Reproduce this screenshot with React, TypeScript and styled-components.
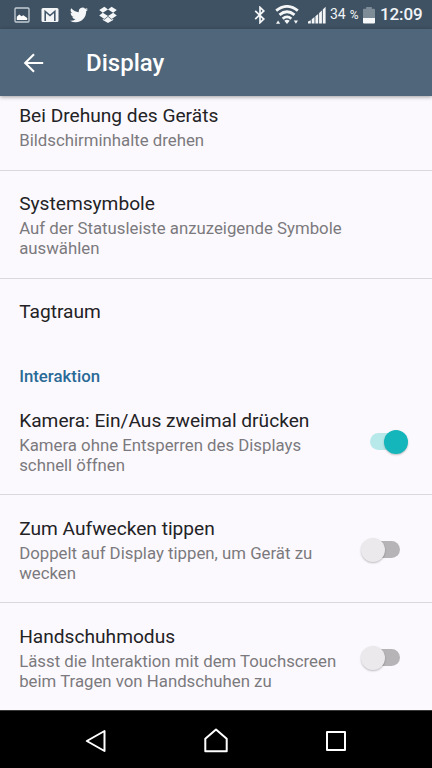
import React from "react";
import styled, { createGlobalStyle } from "styled-components";

const GlobalStyle = createGlobalStyle`
  *, *::before, *::after { box-sizing: border-box; }
  body { margin: 0; background: #fbf9fd; font-family: Roboto, "Noto Sans", sans-serif; }
`;

const Screen = styled.div`
  width: 432px;
  height: 768px;
  display: flex;
  flex-direction: column;
  overflow: hidden;
  background: #fbf9fd;
`;

const StatusBar = styled.div`
  flex: none;
  height: 29px;
  display: flex;
  align-items: center;
  justify-content: space-between;
  padding: 0 10px 0 14px;
  background: #3f5263;
  color: #f2f5f7;
`;

const Notifications = styled.div`
  display: flex;
  align-items: center;
  gap: 11px;
`;

const System = styled.div`
  display: flex;
  align-items: center;
`;

const Indicators = styled.div`
  display: flex;
  align-items: center;
  gap: 9px;
`;

const Percent = styled.span`
  width: 33px;
  margin-left: 4px;
  font-size: 14px;
  line-height: 29px;
  white-space: nowrap;
  padding-top: 1px;
  small { font-size: 12px; margin-left: 4px; }
`;

const Clock = styled.span`
  width: 42px;
  margin-left: 5px;
  font-size: 17px;
  font-weight: 500;
  line-height: 31px;
  letter-spacing: -0.1px;
  white-space: nowrap;
`;

const AppBar = styled.header`
  flex: none;
  position: relative;
  height: 67px;
  display: flex;
  align-items: center;
  padding-left: 23px;
  gap: 42px;
  background: #50667a;
  color: #fff;
  box-shadow: 0 1px 4px rgba(0, 0, 0, 0.38);
`;

const PageTitle = styled.h1`
  margin: 0;
  padding-top: 1px;
  font-size: 24px;
  font-weight: 500;
  line-height: 30px;
`;

const List = styled.main`
  flex: 1;
  min-height: 0;
  overflow: hidden;
`;

const Row = styled.section<{ $height: number; $top: number; $divided?: boolean }>`
  height: ${(p) => p.$height}px;
  padding: ${(p) => p.$top}px 24px 0 19.2px;
  display: flex;
  align-items: flex-start;
  justify-content: space-between;
  border-bottom: ${(p) => (p.$divided ? "1px solid #dbd9dc" : "none")};
`;

const Title = styled.h2`
  margin: 0;
  font-size: 19.15px;
  font-weight: 400;
  line-height: 23px;
  color: #232225;
  white-space: nowrap;
`;

const Summary = styled.p`
  margin: 4px 0 0;
  font-size: 16.8px;
  line-height: 19.5px;
  color: #7b797d;
  white-space: pre;
`;

const SectionTitle = styled.h3`
  height: 42px;
  margin: 0;
  padding: 21px 0 0 19.2px;
  font-size: 16.8px;
  font-weight: 500;
  line-height: 20px;
  color: #2a6a97;
`;

const Track = styled.span<{ $on: boolean }>`
  flex: none;
  width: 29px;
  height: 17px;
  margin: 24px ${(p) => (p.$on ? 9 : 8)}px 0 0;
  display: flex;
  align-items: center;
  justify-content: ${(p) => (p.$on ? "flex-end" : "flex-start")};
  border-radius: 9px;
  background: ${(p) => (p.$on ? "#b8e9ea" : "#b6b4b7")};
`;

const Thumb = styled.span<{ $on: boolean }>`
  flex: none;
  width: 24px;
  height: 24px;
  margin: ${(p) => (p.$on ? "0 -9px 0 0" : "0 0 0 -10px")};
  border-radius: 50%;
  background: ${(p) => (p.$on ? "#14b6bb" : "#ebe9ec")};
  box-shadow: 0 1px 2px rgba(0, 0, 0, 0.25);
`;

const NavBar = styled.nav`
  flex: none;
  height: 58px;
  display: grid;
  grid-template-columns: repeat(3, 120px);
  justify-content: center;
  align-items: center;
  justify-items: center;
  background: #000;
  border-top: 1px solid #39393a;
  padding-top: 3px;
`;

function Switch({ on }: { on: boolean }) {
  return (
    <Track $on={on} role="switch" aria-checked={on}>
      <Thumb $on={on} />
    </Track>
  );
}

interface SettingProps {
  title: string;
  summary?: string;
  height?: number;
  top?: number;
  divided?: boolean;
  on?: boolean;
}

function Setting({ title, summary, height = 108, top = 21, divided = true, on }: SettingProps) {
  return (
    <Row $height={height} $top={top} $divided={divided}>
      <div>
        <Title>{title}</Title>
        {summary && <Summary>{summary}</Summary>}
      </div>
      {on !== undefined && <Switch on={on} />}
    </Row>
  );
}

const PictureIcon = () => (
  <svg width="16" height="16" viewBox="0 0 16 16">
    <rect x="1" y="1" width="14" height="14" rx="1" fill="none" stroke="#c5ced5" strokeWidth="1.3" />
    <path d="M2.8 13V9.7l2.5-2.2 2.2 1.8 1.8-1 3.9 2.8V13z" fill="#fff" />
  </svg>
);

const MailIcon = () => (
  <svg width="18" height="16" viewBox="0 0 18 16">
    <rect x=".5" y="1" width="17" height="14" rx="1.5" fill="#f2f4f6" />
    <path d="M4.2 14V4.4L9 8.5l4.8-4.1V14" fill="none" stroke="#43576a" strokeWidth="1.6" />
  </svg>
);

const BirdIcon = () => (
  <svg width="18" height="18" viewBox="0 0 24 24" fill="#f4f6f8">
    <path d="M23.95 4.57a10 10 0 0 1-2.82.77 4.96 4.96 0 0 0 2.16-2.72c-.95.55-2 .96-3.13 1.18a4.92 4.92 0 0 0-8.38 4.48A13.93 13.93 0 0 1 1.64 3.16a4.92 4.92 0 0 0 1.52 6.57 4.9 4.9 0 0 1-2.23-.61v.06a4.92 4.92 0 0 0 3.95 4.83 5 5 0 0 1-2.21.08 4.94 4.94 0 0 0 4.6 3.42A9.87 9.87 0 0 1 0 19.54a13.99 13.99 0 0 0 7.55 2.21c9.05 0 14-7.5 14-13.98 0-.21 0-.42-.02-.63a9.94 9.94 0 0 0 2.42-2.57z" />
  </svg>
);

const BoxIcon = () => (
  <svg width="18" height="17" viewBox="0 0 18 17" fill="#f4f6f8">
    <path d="M5.4.7 9 3.6 3.8 6.8.2 4zM12.6.7 9 3.6l5.2 3.2L17.8 4zM.2 9.6l3.6-2.8L9 10l-3.6 3zM17.8 9.6l-3.6-2.8L9 10l3.6 3zM9 10.8l3.6 3 1.6-1v1.1L9 17l-5.2-3.1v-1.1l1.6 1z" />
  </svg>
);

const BluetoothIcon = () => (
  <svg width="12" height="18" viewBox="0 0 12 18" fill="none" stroke="#f4f6f8" strokeWidth="1.7">
    <path d="m1.2 4.9 8.6 8.2L6 16.7V1.3l3.8 3.6-8.6 8.2" />
  </svg>
);

const WifiIcon = () => (
  <svg width="24" height="20" viewBox="0 0 24 20">
    <g fill="none" stroke="#f4f6f8" strokeWidth="2.8">
      <path d="M1.2 5.7q10.8-8.6 21.6 0" />
      <path d="M4.5 9.8q7.5-6.2 15 0" />
      <path d="M7.7 13.7q4.3-3.7 8.6 0" />
    </g>
    <path d="m9.3 15.8q2.7-2.2 5.4 0L12 19zM1 18.7l2.1-3.3 2.1 3.3zM18.8 15.4h4.2l-2.1 3.3z" fill="#f4f6f8" />
  </svg>
);

const SignalIcon = () => (
  <svg width="18" height="18" viewBox="0 0 18 18" fill="#f4f6f8">
    <path d="M0 17.5v-2l2.8-1.3v3.3zM3.7 13.3l2.8-2.2v6.4H3.7zM7.4 10.2l2.8-2.3v9.6H7.4zM11.1 7l2.8-2.5v13h-2.8zM14.8 3.6l2.8-2.8v16.7h-2.8z" />
  </svg>
);

const BatteryIcon = () => (
  <svg width="12" height="18" viewBox="0 0 12 18">
    <path d="M3.2 1h5.6v1.7H11a1 1 0 0 1 1 1V12H0V3.7a1 1 0 0 1 1-1h2.2z" fill="#7e8c98" />
    <path d="M0 12h12v4.5a1 1 0 0 1-1 1H1a1 1 0 0 1-1-1z" fill="#f6f8f9" />
  </svg>
);

const ArrowIcon = () => (
  <svg width="21" height="20" viewBox="0 0 21 20" fill="none" stroke="#fff" strokeWidth="2.1">
    <path d="M20.2 10H2.3M11 1.2 2.2 10l8.8 8.8" />
  </svg>
);

const NavIcon = ({ d }: { d: string }) => (
  <svg width="28" height="28" viewBox="0 0 28 28" fill="none" stroke="#fff" strokeWidth="2" strokeLinejoin="round">
    <path d={d} />
  </svg>
);

export default function App() {
  return (
    <>
      <GlobalStyle />
      <Screen>
        <StatusBar>
          <Notifications>
            <PictureIcon />
            <MailIcon />
            <BirdIcon />
            <BoxIcon />
          </Notifications>
          <System>
            <Indicators>
              <BluetoothIcon />
              <WifiIcon />
              <SignalIcon />
            </Indicators>
            <Percent>34<small>%</small></Percent>
            <BatteryIcon />
            <Clock>12:09</Clock>
          </System>
        </StatusBar>
        <AppBar>
          <ArrowIcon />
          <PageTitle>Display</PageTitle>
        </AppBar>
        <List>
          <Setting title="Bei Drehung des Geräts" summary="Bildschirminhalte drehen" height={75} top={8} />
          <Setting title="Systemsymbole" summary={"Auf der Statusleiste anzuzeigende Symbole\nauswählen"} />
          <Setting title="Tagtraum" height={66} divided={false} />
          <SectionTitle>Interaktion</SectionTitle>
          <Setting title="Kamera: Ein/Aus zweimal drücken" summary={"Kamera ohne Entsperren des Displays\nschnell öffnen"} top={22} on />
          <Setting title="Zum Aufwecken tippen" summary={"Doppelt auf Display tippen, um Gerät zu\nwecken"} top={22} on={false} />
          <Setting title="Handschuhmodus" summary={"Lässt die Interaktion mit dem Touchscreen\nbeim Tragen von Handschuhen zu"} top={22} divided={false} on={false} />
        </List>
        <NavBar>
          <NavIcon d="M4.8 14 22.5 4v20z" />
          <NavIcon d="M3.3 11.8 14 2.5l10.7 9.3v12.5H3.3z" />
          <NavIcon d="M5 5h18v18H5z" />
        </NavBar>
      </Screen>
    </>
  );
}
